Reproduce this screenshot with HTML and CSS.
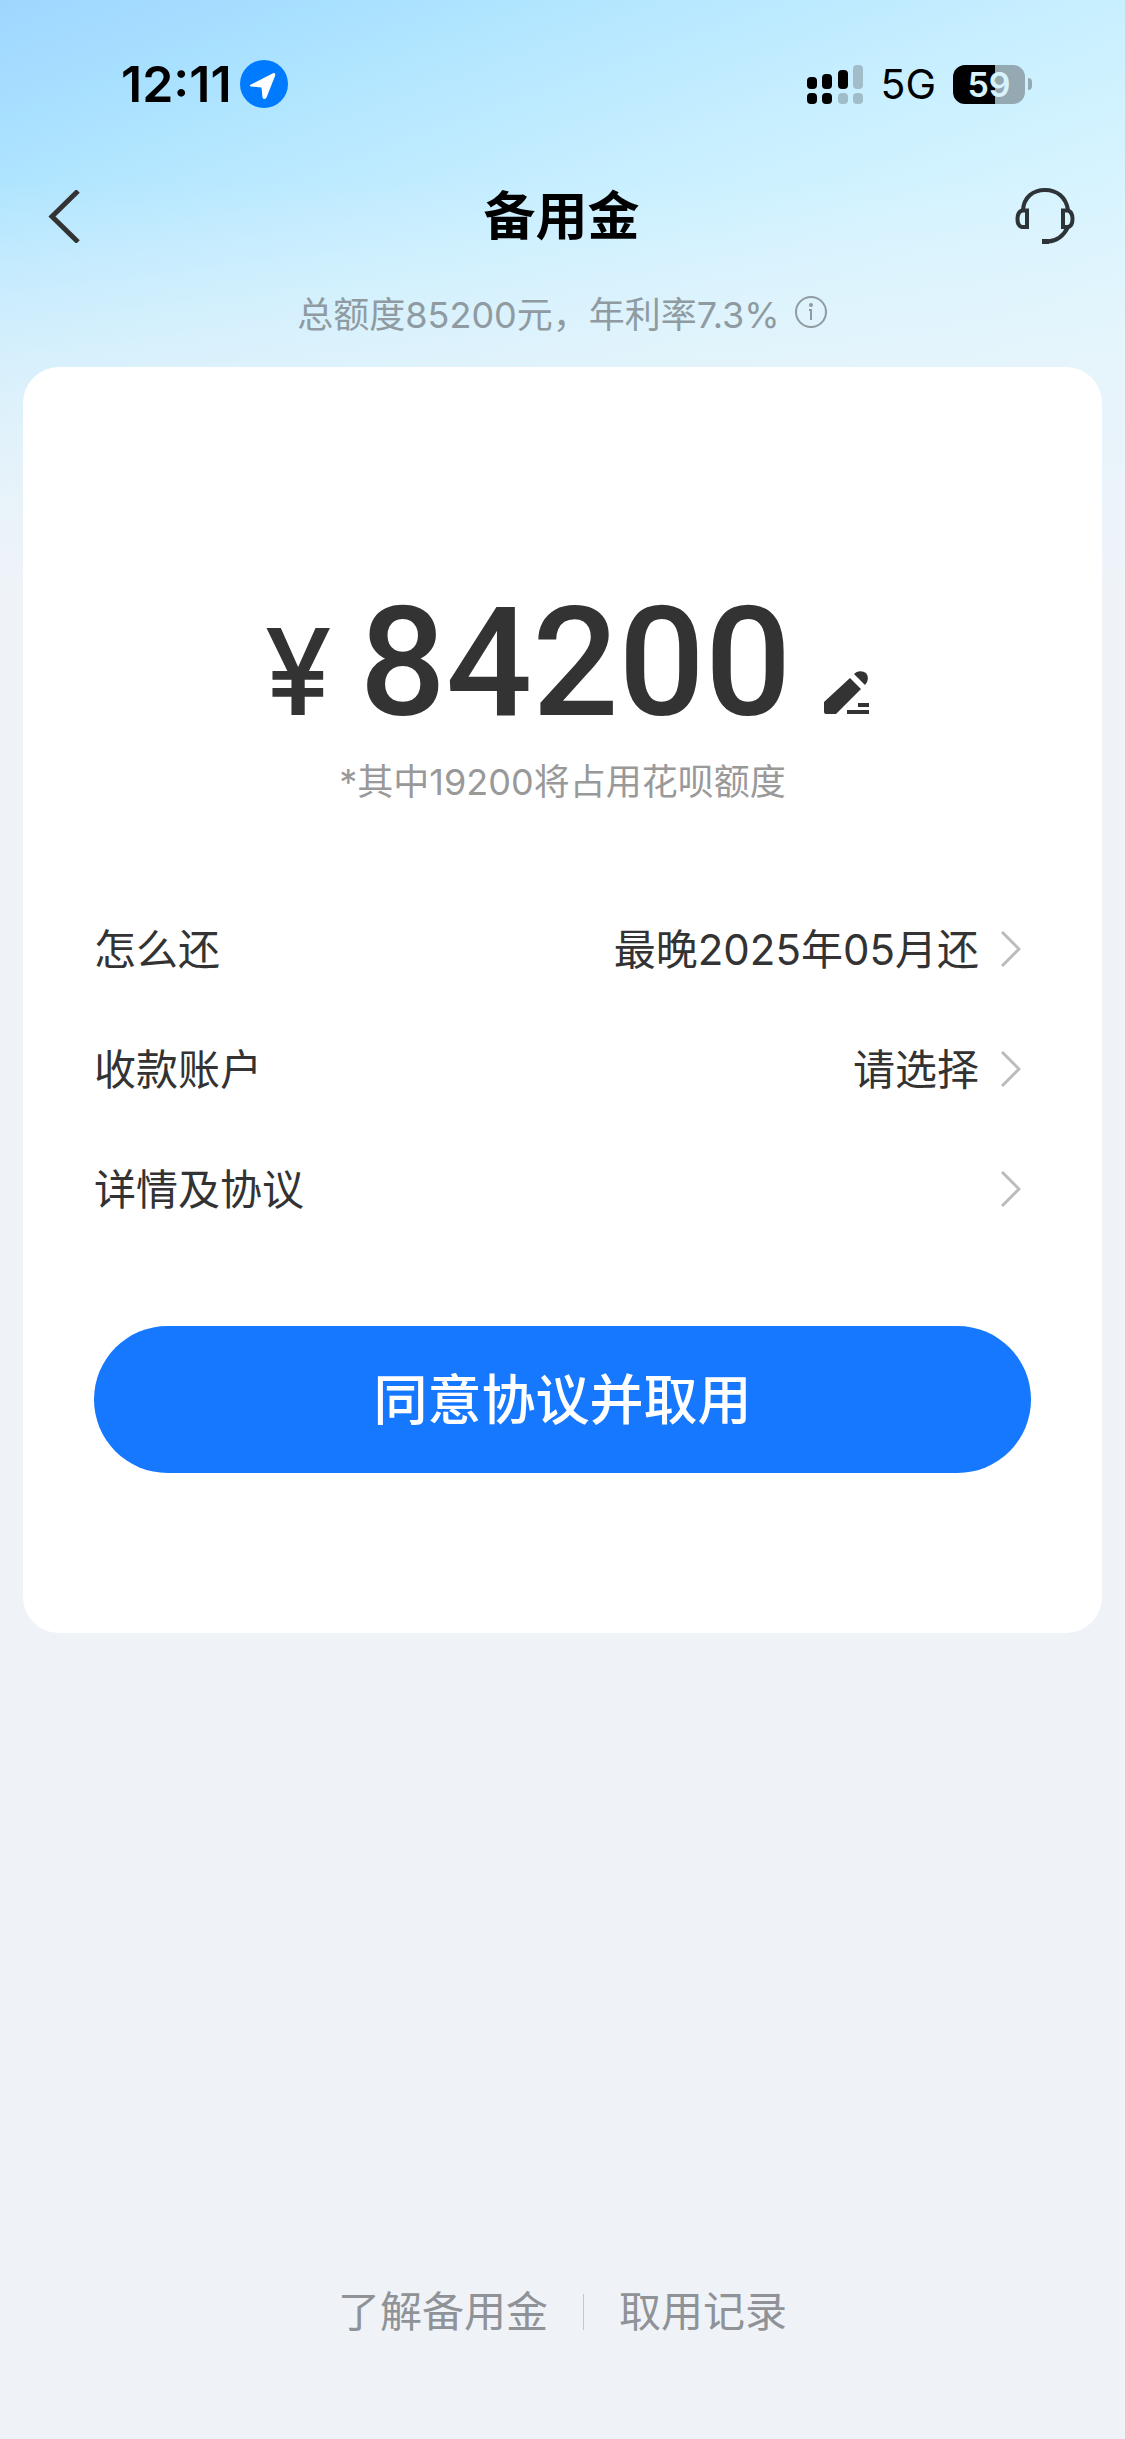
FILE: index.html
```html
<!DOCTYPE html>
<html lang="zh-CN">
<head>
<meta charset="utf-8">
<meta name="viewport" content="width=device-width, initial-scale=1">
<title>备用金</title>
<link rel="stylesheet" href="styles.css">
</head>
<body>
<div class="page">
  <div class="status">
    <div class="status-group status-left">
      <span class="time">12:11</span>
      <svg class="location" viewBox="0 0 48 48" aria-hidden="true">
        <circle cx="24" cy="24" r="24" fill="#007aff"/>
        <path d="M11 24.500L32.500 13.500Q36 12 35 16L26.500 37.500Q24 40.500 22.500 37.500L21.500 27.500L11 26.500Q8.500 25.500 11 24.500Z" fill="#fff"/>
      </svg>
    </div>
    <div class="status-group status-right">
      <svg class="signal" viewBox="0 0 56 39" aria-hidden="true">
        <g fill="#000">
          <rect x="0" y="12" width="10" height="12" rx="4"/>
          <rect x="15" y="9" width="10" height="15" rx="4"/>
          <rect x="31" y="5" width="10" height="19" rx="4"/>
          <rect x="0" y="28" width="10" height="11" rx="4"/>
          <rect x="15" y="28" width="10" height="11" rx="4"/>
        </g>
        <g fill="#a0bdc9">
          <rect x="46" y="0" width="10" height="24" rx="4"/>
          <rect x="31" y="28" width="10" height="11" rx="4"/>
          <rect x="46" y="28" width="10" height="11" rx="4"/>
        </g>
      </svg>
      <span class="network">5G</span>
      <span class="battery"><span class="battery-body">59</span><span class="battery-tip"></span></span>
    </div>
  </div>

  <header class="nav">
    <button class="icon-button" type="button" aria-label="返回">
      <svg class="back" viewBox="0 0 33 53" aria-hidden="true"><path d="M30 1L4 26.500L30 52" fill="none" stroke="#333" stroke-width="5"/></svg>
    </button>
    <h1 class="title">备用金</h1>
    <button class="icon-button support" type="button" aria-label="客服">
      <svg class="headset" viewBox="0 0 60 58" fill="none" stroke="#2e3338" stroke-width="4" aria-hidden="true">
        <path d="M8 23C9 10 18 3 30 3S51 10 53 23"/>
        <path d="M12 23.500H7Q2.500 25 2.500 32T7 40H12ZM48 23.500H53Q57.500 25 57.500 32T53 40H48Z"/>
        <path d="M53 40C48 50 41 54 33 54.500"/>
        <path d="M27 54.500H34" stroke-width="5"/>
      </svg>
    </button>
  </header>

  <p class="quota">总额度85200元，年利率7.3%
    <button class="icon-button" type="button" aria-label="说明">
      <svg class="info" viewBox="0 0 34 34" aria-hidden="true"><circle cx="17" cy="17" r="15" fill="none" stroke="#8f9ba1" stroke-width="2"/><circle cx="17" cy="10" r="2" fill="#8f9ba1"/><path d="M15 15H17V25" fill="none" stroke="#8f9ba1" stroke-width="2"/></svg>
    </button>
  </p>

  <main class="card">
    <div class="amount">
      <span class="currency">¥</span><span class="number">84200</span>
      <button class="icon-button edit" type="button" aria-label="修改金额">
        <svg class="pen" viewBox="0 0 46 45" fill="#333" aria-hidden="true">
          <path d="M0 32L26 8L37 19L12 44H2Q0 44 0 42ZM30 4A9 9 0 0 1 42 3A9 9 0 0 1 41 15Z"/>
          <path d="M34 33H45V37H34ZM23 40H45V44H23Z"/>
        </svg>
      </button>
    </div>
    <p class="note">*其中19200将占用花呗额度</p>

    <div class="rows">
      <a class="row" href="#repay"><span class="label">怎么还</span><span class="value">最晚2025年05月还</span><svg class="chevron" viewBox="0 0 20 36" aria-hidden="true"><path d="M1 1L18 18L1 35"/></svg></a>
      <a class="row" href="#account"><span class="label">收款账户</span><span class="value">请选择</span><svg class="chevron" viewBox="0 0 20 36" aria-hidden="true"><path d="M1 1L18 18L1 35"/></svg></a>
      <a class="row" href="#terms"><span class="label">详情及协议</span><span class="value"></span><svg class="chevron" viewBox="0 0 20 36" aria-hidden="true"><path d="M1 1L18 18L1 35"/></svg></a>
    </div>

    <button class="submit" type="button">同意协议并取用</button>
  </main>

  <footer class="footer">
    <a href="#about">了解备用金</a>
    <span class="divider"></span>
    <a href="#records">取用记录</a>
  </footer>
</div>
</body>
</html>
```

FILE: styles.css
```css
* {
  box-sizing: border-box;
}

body {
  margin: 0;
  background: #eff3f8;
  color: #333;
  font-family: Inter, "Noto Sans CJK SC", sans-serif;
}

h1,
p {
  margin: 0;
}

a {
  color: inherit;
  text-decoration: none;
}

svg {
  display: block;
}

.page {
  display: flex;
  flex-direction: column;
  min-height: 100vh;
  background:
    linear-gradient(180deg, rgba(239, 243, 248, 0) 180px, #eff3f8 600px),
    linear-gradient(160deg, #9fd6ff 0, #a8e0ff 120px, #b0e5ff 180px, #bfebff 300px, #caf0ff 400px, #d5f3ff 520px, #def6fe 700px);
}

.status {
  display: flex;
  justify-content: space-between;
  align-items: center;
  height: 168px;
  padding: 0 93px 0 121px;
  color: #000;
}

.status-group {
  display: flex;
  align-items: center;
}

.status-left {
  gap: 8px;
}

.status-right {
  gap: 17px;
}

.time {
  font-size: 50px;
  font-weight: 600;
}

.location {
  width: 48px;
  height: 48px;
}

.signal {
  width: 56px;
  height: 39px;
}

.network {
  font-size: 41px;
}

.battery {
  display: flex;
  align-items: center;
  gap: 3px;
}

.battery-body {
  width: 72px;
  height: 39px;
  border-radius: 12px;
  background: linear-gradient(90deg, #000 58%, #94a9b1 58%);
  color: #d9f3fd;
  font-size: 34px;
  font-weight: 600;
  line-height: 39px;
  text-align: center;
}

.battery-tip {
  width: 4px;
  height: 12px;
  border-radius: 0 4px 4px 0;
  background: #94a9b1;
}

.nav {
  display: grid;
  grid-template-columns: 1fr auto 1fr;
  align-items: center;
  height: 96px;
  padding: 0 50px 0 48px;
}

.icon-button {
  justify-self: start;
  padding: 0;
  border: 0;
  background: none;
}

.support {
  justify-self: end;
}

.back {
  width: 33px;
  height: 53px;
}

.headset {
  width: 60px;
  height: 58px;
}

.title {
  padding-bottom: 8px;
  color: #000;
  font-size: 52px;
  font-weight: 700;
}

.quota {
  display: flex;
  justify-content: center;
  align-items: center;
  gap: 14px;
  height: 103px;
  padding-bottom: 8px;
  color: #8f9ba1;
  font-size: 36px;
}

.info {
  width: 34px;
  height: 34px;
}

.card {
  margin: 0 23px;
  padding: 216px 71px 160px;
  border-radius: 36px;
  background: #fff;
}

.amount {
  display: flex;
  justify-content: center;
  align-items: baseline;
  padding-left: 10px;
  font-weight: 500;
  line-height: 160px;
}

.currency {
  margin-right: 28px;
  font-size: 120px;
}

.number {
  font-family: Roboto, sans-serif;
  font-size: 152px;
}

.edit {
  margin-left: 33px;
}

.pen {
  width: 46px;
  height: 45px;
}

.note {
  color: #999;
  font-size: 36px;
  line-height: 60px;
  text-align: center;
}

.rows {
  margin: 77px 0;
}

.row {
  display: flex;
  align-items: center;
  height: 120px;
  padding-right: 10px;
  font-size: 42px;
}

.label,
.value {
  padding-bottom: 6px;
}

.value {
  margin-left: auto;
}

.chevron {
  width: 20px;
  height: 36px;
  margin-left: 22px;
  fill: none;
  stroke: #bbb;
  stroke-width: 3;
}

.submit {
  display: block;
  width: 100%;
  height: 147px;
  padding: 0 0 6px;
  border: 0;
  border-radius: 74px;
  background: #1677ff;
  color: #fff;
  font: inherit;
  font-size: 54px;
  font-weight: 500;
}

.footer {
  display: flex;
  justify-content: center;
  align-items: center;
  gap: 35px;
  margin-top: auto;
  padding-bottom: 96px;
  color: #8f9296;
  font-size: 42px;
  line-height: 62px;
}

.divider {
  width: 1px;
  height: 36px;
  background: #c4c7cb;
}
```
